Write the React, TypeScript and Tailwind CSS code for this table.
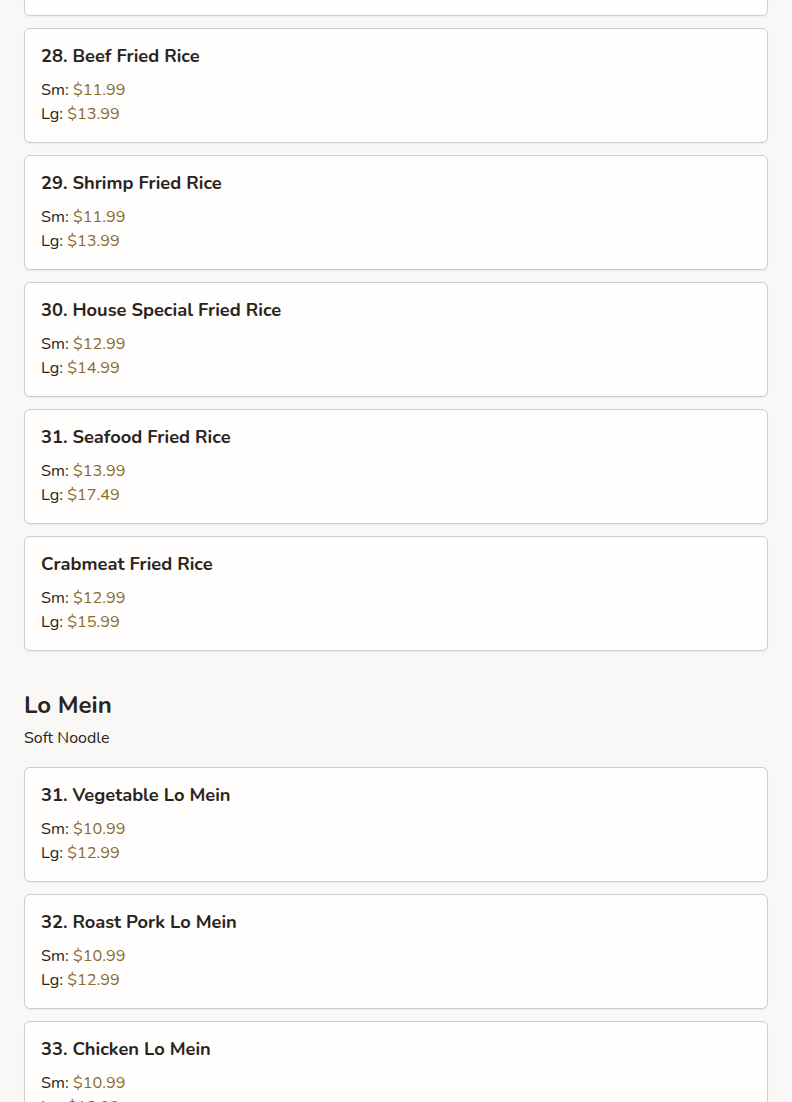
import React from "react";

type Item = { name: string; sm: string; lg: string };

const rice: Item[] = [
  { name: "27. Chicken Fried Rice", sm: "$11.99", lg: "$13.99" },
  { name: "28. Beef Fried Rice", sm: "$11.99", lg: "$13.99" },
  { name: "29. Shrimp Fried Rice", sm: "$11.99", lg: "$13.99" },
  { name: "30. House Special Fried Rice", sm: "$12.99", lg: "$14.99" },
  { name: "31. Seafood Fried Rice", sm: "$13.99", lg: "$17.49" },
  { name: "Crabmeat Fried Rice", sm: "$12.99", lg: "$15.99" },
];

const loMein: Item[] = [
  { name: "31. Vegetable Lo Mein", sm: "$10.99", lg: "$12.99" },
  { name: "32. Roast Pork Lo Mein", sm: "$10.99", lg: "$12.99" },
  { name: "33. Chicken Lo Mein", sm: "$10.99", lg: "$12.99" },
  { name: "34. Beef Lo Mein", sm: "$11.99", lg: "$13.99" },
];

function Card({ item }: { item: Item }) {
  return (
    <div className="rounded-md border border-[#cfcdca] bg-[#fffefd] px-4 py-4 shadow-[0_1px_2px_rgba(0,0,0,0.06)]">
      <h3 className="mb-[11px] text-[18.3px] leading-[22px] font-bold text-[#2a2420]">{item.name}</h3>
      <div className="text-[16.3px] leading-[24px] text-[#2a2420]">
        Sm: <span className="text-[#8a6a2c]">{item.sm}</span>
      </div>
      <div className="text-[16.3px] leading-[24px] text-[#2a2420]">
        Lg: <span className="text-[#8a6a2c]">{item.lg}</span>
      </div>
    </div>
  );
}

export default function App() {
  return (
    <div
      className="min-h-[1102px] overflow-hidden bg-[#f9f8f6] px-6"
      style={{ fontFamily: "Nunito, Lato, 'Noto Sans', sans-serif" }}
    >
      <div className="-mt-[99px] flex flex-col gap-3">
        {rice.map((it) => (
          <Card key={it.name} item={it} />
        ))}
      </div>
      <div className="mt-[38px]">
        <h2 className="text-[24px] leading-[32px] font-bold text-[#2a2420]">Lo Mein</h2>
        <p className="mt-[5px] text-[16px] leading-[24px] text-[#2a2420]">Soft Noodle</p>
      </div>
      <div className="mt-[17px] flex flex-col gap-3">
        {loMein.map((it) => (
          <Card key={it.name} item={it} />
        ))}
      </div>
    </div>
  );
}
